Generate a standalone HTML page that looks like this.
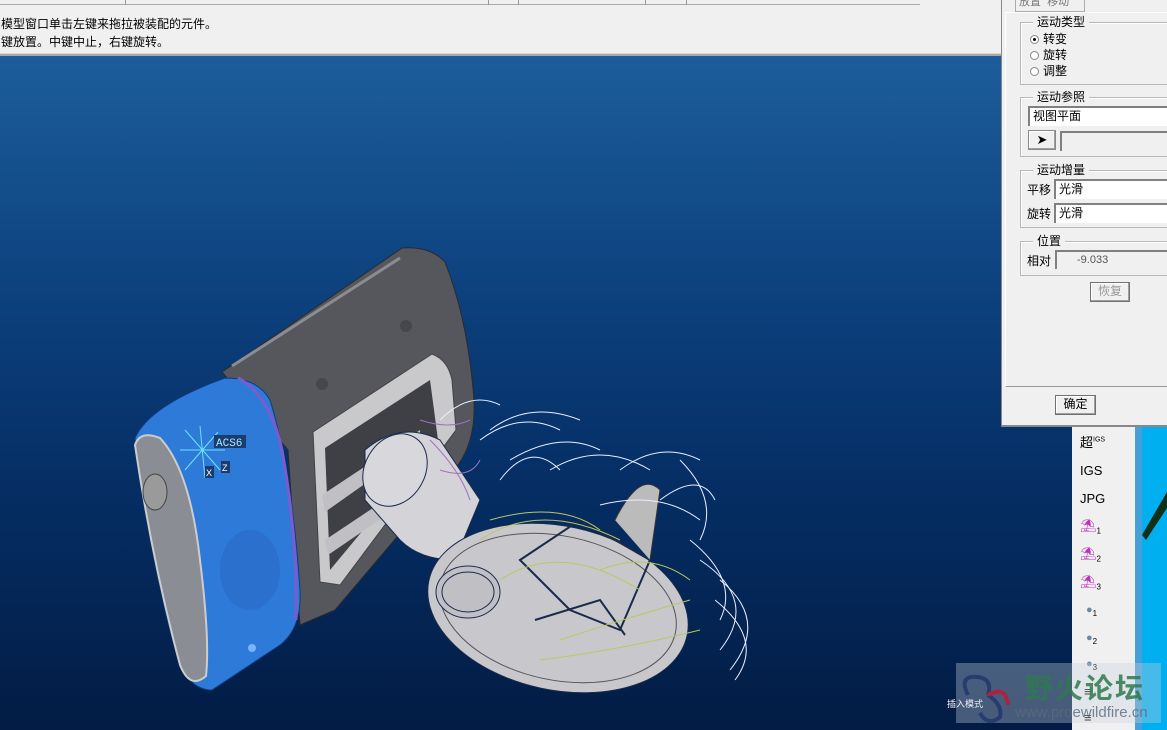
<!DOCTYPE html>
<html><head><meta charset="utf-8"><style>
*{margin:0;padding:0;box-sizing:border-box}
body{width:1167px;height:730px;overflow:hidden;position:relative;background:#f0f0f0;font-family:"Liberation Sans","Noto Sans CJK SC",sans-serif;font-size:12px;color:#000}
.abs{position:absolute}
.top{left:0;top:0;width:1001px;height:56px;background:#f0f0f0}
.vp{left:0;top:56px;width:1072px;height:674px;background:linear-gradient(#1d5d9b 0%,#0e4582 30%,#063068 60%,#021c44 100%)}
.frame{position:absolute;border:1px solid #b8b8b8;border-right:none;box-shadow:inset 1px 1px 0 #fff}
.legend{position:absolute;top:-8px;left:12px;background:#f0f0f0;padding:0 4px;font-size:12px;line-height:14px}
.inp{position:absolute;background:#fff;border-top:2px solid #808080;border-left:2px solid #808080;height:20px;font-size:12px;line-height:17px;padding-left:3px}
.btn{position:absolute;border:1px solid #707070;box-shadow:inset -1px -1px 0 #a0a0a0,inset 1px 1px 0 #fff;background:#f0f0f0;text-align:center;font-size:12px;line-height:17px}
.radio{position:absolute;left:1030px;font-size:12px;line-height:14px}
.radio i{display:inline-block;width:9px;height:9px;border-radius:50%;border:1px solid #888;background:#fff;margin-right:4px;vertical-align:-1px;position:relative}
.tb{position:absolute;left:1080px;font-size:13px}
</style></head><body>
<div class="abs top">
 <div class="abs" style="left:0;top:0;width:920px;height:5px;border-bottom:1px solid #aaa"></div>
 <div class="abs" style="left:125px;top:0;width:1px;height:5px;background:#999"></div>
 <div class="abs" style="left:488px;top:0;width:1px;height:5px;background:#999"></div>
 <div class="abs" style="left:518px;top:0;width:1px;height:5px;background:#999"></div>
 <div class="abs" style="left:645px;top:0;width:1px;height:5px;background:#999"></div>
 <div class="abs" style="left:686px;top:0;width:1px;height:5px;background:#999"></div>
 <div class="abs" style="left:1px;top:16px;font-size:12px;line-height:16px">模型窗口单击左键来拖拉被装配的元件。</div>
 <div class="abs" style="left:1px;top:34px;font-size:12px;line-height:16px">键放置。中键中止，右键旋转。</div>
 <div class="abs" style="left:0;top:53px;width:1001px;height:3px;background:#a8a8a8;border-top:1px solid #d8d8d8"></div>
</div>
<div class="abs vp"></div>
<svg class="abs" style="left:0;top:56px" width="1072" height="674" viewBox="0 56 1072 674">
 <!-- gray body -->
 <path d="M222 372 L402 248 Q430 246 445 262 Q468 320 474 400 Q476 440 458 465 L335 610 L300 625 L288 450 Z" fill="#55575c" stroke="#2a2b2e"/>
 <path d="M232 366 L400 258" stroke="#8a8c90" stroke-width="3"/>
 <path d="M313 432 L432 354 Q448 360 452 380 L456 430 L340 585 L320 582 Z" fill="#c9c9cc" stroke="#444"/>
 <path d="M325 448 L430 380 L438 440 L330 570 Z" fill="#3e4045"/>
 <path d="M322 495 L420 430 L420 445 L325 512 Z" fill="#c0c0c4"/>
 <path d="M325 540 L415 480 L416 495 L328 555 Z" fill="#c0c0c4"/>
 <circle cx="406" cy="326" r="6" fill="#45474b"/><circle cx="322" cy="384" r="6" fill="#45474b"/>
 <!-- blue shell -->
 <path d="M135 438 Q150 405 225 378 Q258 378 270 400 Q292 470 300 590 Q302 628 280 645 L212 690 Q190 690 178 660 Q150 560 135 438 Z" fill="#2e7ad8" stroke="#0e3c80"/>
 <path d="M238 378 Q270 395 282 450 Q298 540 296 620" stroke="#7a5cd0" stroke-width="3" fill="none"/>
 <path d="M135 445 Q140 430 160 438 Q190 470 200 560 Q210 640 206 676 Q190 690 180 665 Q152 560 135 445 Z" fill="#8a8d93" stroke="#ccc" stroke-width="2"/>
 <ellipse cx="155" cy="492" rx="12" ry="18" fill="#9a9a9a" stroke="#444"/>
 <ellipse cx="250" cy="570" rx="30" ry="40" fill="#2a70cc"/>
 <circle cx="252" cy="648" r="4" fill="#7ab4ff"/>
 <g stroke="#6ee4f4" stroke-width="1"><path d="M185 430 L220 470 M185 470 L218 432 M200 426 L205 478 M180 450 L225 450"/></g>
 <rect x="214" y="435" width="32" height="13" fill="#1a3c6e"/><text x="216" y="446" fill="#a8e8ff" font-size="11" font-family="Liberation Mono,monospace">ACS6</text>
 <rect x="205" y="466" width="9" height="12" fill="#1a3c6e"/><text x="206" y="476" fill="#fff" font-size="9">X</text>
 <rect x="221" y="461" width="9" height="12" fill="#1a3c6e"/><text x="222" y="471" fill="#fff" font-size="9">Z</text>
 <!-- neck -->
 <path d="M365 450 Q400 420 440 440 L480 500 L455 560 Q420 560 400 540 L365 500 Z" fill="#d4d4d8" stroke="#1a2a4a"/>
 <ellipse cx="395" cy="470" rx="30" ry="38" fill="#d8d8dc" stroke="#1a2a4a" transform="rotate(30 395 470)"/>
 <!-- disc -->
 <ellipse cx="558" cy="608" rx="132" ry="82" fill="#c8c8cc" stroke="#1a2a4a" transform="rotate(12 558 608)"/>
 <ellipse cx="558" cy="608" rx="120" ry="72" fill="none" stroke="#555" transform="rotate(12 558 608)"/>
 <ellipse cx="468" cy="592" rx="32" ry="26" fill="#c0c0c4" stroke="#1a2a4a"/>
 <ellipse cx="468" cy="592" rx="26" ry="20" fill="none" stroke="#1a2a4a"/>
 <path d="M520 560 L580 520 L650 560 L620 630 L570 610 Z" fill="none" stroke="#1a2a4a" stroke-width="2"/>
 <path d="M535 620 L600 600 L625 635" fill="none" stroke="#1a2a4a" stroke-width="2"/>
 <path d="M615 520 Q640 470 660 490 L650 560" fill="#bbb" stroke="#333"/>
 <g fill="none" stroke="#e8f0ff" stroke-width="1">
  <path d="M440 420 Q470 390 500 405"/><path d="M480 440 Q520 410 560 430"/><path d="M500 480 Q530 440 560 470"/>
  <path d="M620 470 Q660 440 700 460"/><path d="M680 460 Q720 500 700 540"/><path d="M700 560 Q760 600 720 650"/>
  <path d="M720 580 Q770 620 730 670"/><path d="M690 540 Q740 580 720 620"/><path d="M550 470 Q600 440 650 470"/>
  <path d="M490 430 Q530 400 580 420"/><path d="M510 460 Q560 430 600 450"/><path d="M660 500 Q700 470 715 500"/>
  <path d="M715 600 Q765 640 735 680"/><path d="M600 505 Q660 490 700 520"/>
 </g>
 <g fill="none" stroke="#b8c860" stroke-width="1">
  <path d="M480 540 Q540 500 620 540"/><path d="M500 580 Q560 540 640 590"/><path d="M560 640 Q620 620 690 600"/><path d="M540 660 Q620 650 700 630"/>
  <path d="M490 520 Q560 500 600 530"/><path d="M600 570 Q650 550 690 580"/>
 </g>
 <g fill="none" stroke="#a070c0"><path d="M430 440 Q460 470 470 500"/><path d="M440 470 Q470 480 480 460"/><path d="M420 420 Q450 430 470 420"/></g>
 <text x="947" y="707" fill="#fff" font-size="9">插入模式</text>
</svg>
<!-- right toolbar -->
<div class="abs" style="left:1072px;top:427px;width:63px;height:303px;background:#f0f0f0"></div>
<div class="abs" style="left:1135px;top:427px;width:32px;height:303px;background:#00aff0"></div>
<div class="abs" style="left:1135px;top:427px;width:7px;height:303px;background:#45a0d8"></div>
<svg class="abs" style="left:1142px;top:480px" width="25" height="70"><path d="M25 12 L25 28 L4 60 L0 55 Z" fill="#123018"/></svg>
<div class="tb" style="top:432px">超<sup style="font-size:7px">IGS</sup></div>
<div class="tb" style="top:463px">IGS</div>
<div class="tb" style="top:491px">JPG</div>
<div class="tb" style="top:518px;color:#c030c0">⛱<sub style="font-size:8px;color:#000">1</sub></div>
<div class="tb" style="top:546px;color:#c030c0">⛱<sub style="font-size:8px;color:#000">2</sub></div>
<div class="tb" style="top:574px;color:#c030c0">⛱<sub style="font-size:8px;color:#000">3</sub></div>
<div class="tb" style="top:604px;left:1086px;color:#6a8aa8;font-size:11px">●<sub style="font-size:8px;color:#000">1</sub></div>
<div class="tb" style="top:632px;left:1086px;color:#6a8aa8;font-size:11px">●<sub style="font-size:8px;color:#000">2</sub></div>
<div class="tb" style="top:658px;left:1086px;color:#6a8aa8;font-size:11px">●<sub style="font-size:8px;color:#000">3</sub></div>
<div class="tb" style="top:684px;left:1084px">≡</div>
<div class="tb" style="top:710px;left:1084px">≡</div>
<!-- watermark -->
<div class="abs" style="left:956px;top:663px;width:205px;height:60px;background:rgba(200,210,220,0.35)"></div>
<svg class="abs" style="left:958px;top:665px" width="60" height="60"><path d="M10 30 Q0 10 20 12 Q35 14 30 30 M30 30 Q45 40 42 52 Q30 62 22 48" fill="none" stroke="#283c70" stroke-width="4"/><path d="M30 30 Q48 20 50 40" fill="none" stroke="#b02040" stroke-width="4"/></svg>
<div class="abs" style="left:1025px;top:667px;font-size:28px;font-weight:bold;color:#2e7a50;letter-spacing:2px;opacity:.85">野火论坛</div>
<div class="abs" style="left:1015px;top:704px;font-size:15px;color:#5a6a80;opacity:.8">www.proewildfire.cn</div>
<!-- dialog -->
<div class="abs" style="left:1001px;top:0;width:166px;height:427px;background:#f0f0f0;border-left:1px solid #888;border-bottom:2px solid #888"></div>
<div class="abs" style="left:1015px;top:0;width:70px;height:12px;border:1px solid #aaa;border-top:none;font-size:11px;color:#777;line-height:4px">&nbsp;放置&nbsp; 移动</div>
<div class="abs" style="left:1005px;top:12px;width:162px;height:375px;border-top:1px solid #fff;border-left:1px solid #fff;border-bottom:1px solid #999"></div>
<div class="frame" style="left:1020px;top:22px;width:147px;height:63px"><span class="legend">运动类型</span></div>
<div class="radio" style="top:32px"><i><b style="position:absolute;left:2px;top:2px;width:3px;height:3px;background:#000;border-radius:50%"></b></i>转变</div>
<div class="radio" style="top:48px"><i></i>旋转</div>
<div class="radio" style="top:64px"><i></i>调整</div>
<div class="frame" style="left:1020px;top:97px;width:147px;height:60px"><span class="legend">运动参照</span></div>
<div class="inp" style="left:1028px;top:106px;width:139px">视图平面</div>
<div class="btn" style="left:1028px;top:130px;width:28px;height:20px;border-color:#888;font-size:13px">➤</div>
<div class="inp" style="left:1060px;top:131px;width:107px;background:#f0f0f0"></div>
<div class="frame" style="left:1020px;top:170px;width:147px;height:58px"><span class="legend">运动增量</span></div>
<div class="abs" style="left:1027px;top:181px">平移</div><div class="inp" style="left:1054px;top:179px;width:113px">光滑</div>
<div class="abs" style="left:1027px;top:205px">旋转</div><div class="inp" style="left:1054px;top:203px;width:113px">光滑</div>
<div class="frame" style="left:1020px;top:241px;width:147px;height:35px"><span class="legend">位置</span></div>
<div class="abs" style="left:1027px;top:252px">相对</div>
<div class="inp" style="left:1055px;top:250px;width:112px;height:19px;background:#f0f0f0;color:#555;padding-left:20px;font-size:11px">-9.033</div>
<div class="btn" style="left:1090px;top:282px;width:40px;height:20px;color:#999">恢复</div>
<div class="btn" style="left:1055px;top:395px;width:41px;height:20px">确定</div>
</body></html>
